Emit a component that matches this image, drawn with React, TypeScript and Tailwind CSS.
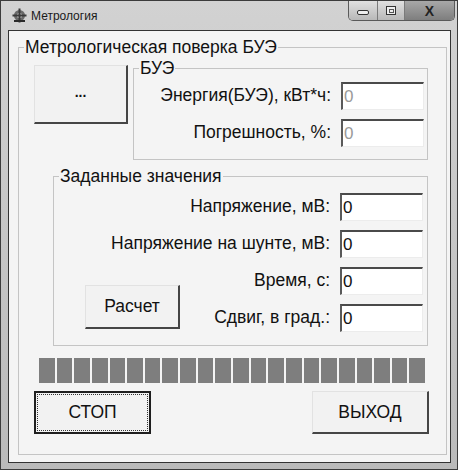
import React from 'react';

function Field({ label, muted }: { label: string; muted?: boolean }) {
  return (
    <div className="flex items-center justify-end gap-[10px]">
      <span className="leading-none whitespace-nowrap">{label}</span>
      <input
        readOnly
        value="0"
        className={`w-[83px] h-[28px] bg-white border-t-2 border-l-2 border-r border-b border-t-[#4a4a4a] border-l-[#5a5a5a] border-r-[#ececec] border-b-[#ececec] px-[1px] text-[17px] outline-none ${muted ? 'text-[#9a9a9a]' : 'text-[#111]'}`}
      />
    </div>
  );
}

function RaisedButton({ children, className }: { children: React.ReactNode; className?: string }) {
  return (
    <button
      className={`flex items-center justify-center bg-[#f2f2f2] border-t border-l border-t-[#e2e2e2] border-l-[#e2e2e2] border-r-2 border-b-2 border-r-[#454545] border-b-[#454545] ${className ?? ''}`}
    >
      {children}
    </button>
  );
}

export default function App() {
  return (
    <div className="w-[461px] h-[473px] bg-white font-[family-name:'Liberation_Sans',Arial,sans-serif] text-[#111] text-[17.5px]">
      <div className="w-[458px] h-[470px] border border-[#3c3c3c] bg-gradient-to-b from-[#d2d2d2] to-[#bababa] flex flex-col">
        {/* title bar */}
        <div className="h-[29px] flex items-start">
          <div className="flex items-center gap-[4px] pl-[11px] pt-[7px]">
            <svg width="15" height="15" viewBox="0 0 15 15">
              <circle cx="7.5" cy="7.5" r="5.5" fill="#6a6a6a" />
              <circle cx="7.5" cy="7.5" r="2.5" fill="#d8d8d8" />
              <rect x="6.5" y="0.5" width="2" height="14" fill="#3a3a3a" />
              <rect x="0.5" y="6.5" width="14" height="2" fill="#3a3a3a" />
              <rect x="2" y="12" width="11" height="2" fill="#2a2a2a" />
            </svg>
            <span className="text-[12px] text-[#1a1a1a] leading-none">Метрология</span>
          </div>
          <div className="ml-auto mr-[2px] flex h-[20px] border border-t-0 border-[#5a5a5a] rounded-b-[5px] overflow-hidden">
            <div className="w-[29px] flex items-center justify-center bg-gradient-to-b from-[#e0e0e0] to-[#b8b8b8] border-r border-[#7a7a7a]">
              <div className="w-[12px] h-[5px] border border-[#333] rounded-[2px] bg-[#eee] mt-[4px]" />
            </div>
            <div className="w-[27px] flex items-center justify-center bg-gradient-to-b from-[#e0e0e0] to-[#b8b8b8] border-r border-[#7a7a7a]">
              <div className="w-[10px] h-[9px] border border-[#333] bg-[#eee] flex items-center justify-center">
                <div className="w-[5px] h-[4px] border border-[#555]" />
              </div>
            </div>
            <div className="w-[49px] flex items-center justify-center bg-gradient-to-b from-[#a8a8a8] to-[#7e7e7e]">
              <span className="text-[14px] font-bold text-[#222] leading-none">X</span>
            </div>
          </div>
        </div>

        {/* client area */}
        <div className="ml-[7px] mr-[6px] mb-[6px] flex-1 border border-[#333] bg-[#f4f4f4]">
          <fieldset className="ml-[9px] mt-[7px] w-[429px] h-[417px] border border-[#c4c4c4]">
            <legend className="ml-[5px] px-[1px] leading-[18px]">Метрологическая поверка БУЭ</legend>

            <div className="flex items-start">
              <RaisedButton className="ml-[15px] mt-[9px] w-[94px] h-[59px]">
                <span className="text-[14px] font-bold leading-none pb-[4px]">...</span>
              </RaisedButton>
              <fieldset className="ml-[5px] mt-[3px] w-[295px] h-[101px] border border-[#c4c4c4]">
                <legend className="ml-[5px] px-[1px] leading-[18px]">БУЭ</legend>
                <div className="flex flex-col gap-[9px] pt-[5px] pr-[3px]">
                  <Field label="Энергия(БУЭ), кВт*ч:" muted />
                  <Field label="Погрешность, %:" muted />
                </div>
              </fieldset>
            </div>

            <fieldset className="ml-[34px] mt-[7px] w-[375px] h-[179px] border border-[#c4c4c4]">
              <legend className="ml-[5px] px-[1px] leading-[18px]">Заданные значения</legend>
              <div className="flex flex-col items-end gap-[9px] pt-[8px] pr-[4px]">
                <Field label="Напряжение, мВ:" />
                <Field label="Напряжение на шунте, мВ:" />
                <div className="w-full flex items-start">
                  <RaisedButton className="ml-[31px] mt-[18px] w-[95px] h-[44px]">Расчет</RaisedButton>
                  <div className="flex-1 flex flex-col items-end gap-[9px]">
                    <Field label="Время, с:" />
                    <Field label="Сдвиг, в град.:" />
                  </div>
                </div>
              </div>
            </fieldset>

            <div className="ml-[19px] mt-[11px] w-[388px] h-[27px] flex gap-[2px] p-[1px]">
              {Array.from({ length: 22 }).map((_, i) => (
                <div key={i} className="flex-1 bg-[#7e7e7e]" />
              ))}
            </div>

            <div className="mt-[7px] flex justify-between pl-[15px] pr-[17px]">
              <button className="w-[117px] h-[43px] border-2 border-[#1e1e1e] bg-[#f2f2f2] p-[1px]">
                <div className="w-full h-full border border-dotted border-[#333] flex items-center justify-center">
                  СТОП
                </div>
              </button>
              <RaisedButton className="w-[117px] h-[43px]">ВЫХОД</RaisedButton>
            </div>
          </fieldset>
        </div>
      </div>
    </div>
  );
}
